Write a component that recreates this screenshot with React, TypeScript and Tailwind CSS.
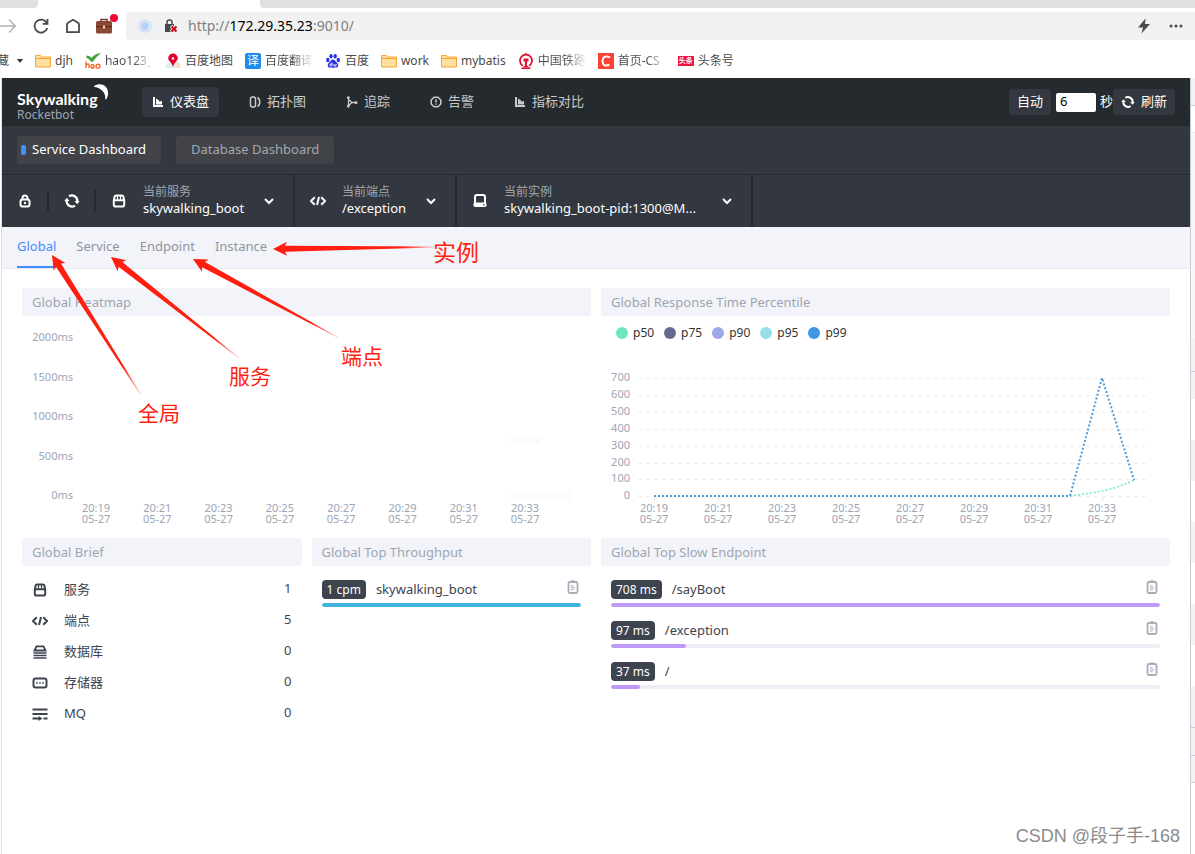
import React from 'react';

type IconProps = { className?: string };

const ChartIcon: React.FC<IconProps> = ({ className }) => (
    <svg viewBox="0 0 12 12" className={className} fill="currentColor">
        <path d="M1 1h2v8h8v2H1z" />
        <path d="M4 2.5 6.5 4l1 1.5L10 5v3.500H4z" />
    </svg>
);

const TopologyIcon: React.FC<IconProps> = ({ className }) => (
    <svg viewBox="0 0 12 12" className={className} fill="none" stroke="currentColor" strokeWidth="1.5">
        <rect x="1.500" y="1" width="5" height="10" rx="2" />
        <path d="M8.500 1.500c3 1.500 3 7.500 0 9" />
    </svg>
);

const TraceIcon: React.FC<IconProps> = ({ className }) => (
    <svg viewBox="0 0 12 12" className={className} fill="none" stroke="currentColor" strokeWidth="1.3">
        <path d="M2.500 2v8M2.500 3.500 6 6.500h4M6 6.500 2.500 9.500" />
        <circle cx="2.300" cy="1.800" r=".8" />
        <circle cx="2.300" cy="10.200" r=".8" />
        <circle cx="10" cy="6.800" r=".8" />
    </svg>
);

const AlarmIcon: React.FC<IconProps> = ({ className }) => (
    <svg viewBox="0 0 12 12" className={className} fill="none" stroke="currentColor" strokeWidth="1.5">
        <path d="M4 1.200h4L10.800 4v4L8 10.800H4L1.200 8V4z" strokeLinejoin="round" />
        <path d="M6 3.200v3.200M6 7.400v1.400" />
    </svg>
);

const RefreshIcon: React.FC<IconProps> = ({ className }) => (
    <svg viewBox="0 0 16 16" className={className} fill="none" stroke="currentColor" strokeWidth="2.200">
        <path d="M5 3.200A5.500 5.500 0 0 1 13.300 8.500M11 12.800A5.500 5.500 0 0 1 2.700 7.500" />
        <path d="M10.500 8h5.200l-2.500 3.200zM.3 8h5.200L2.800 4.800z" fill="currentColor" stroke="none" />
    </svg>
);

const LockIcon: React.FC<IconProps> = ({ className }) => (
    <svg viewBox="0 0 16 16" className={className} fill="none" stroke="currentColor" strokeWidth="2">
        <rect x="3.500" y="6.500" width="9" height="7" rx="2" />
        <path d="M5.500 6.500V5a2.500 2.500 0 0 1 5 0v1.500M8 9v2" />
    </svg>
);

const ServiceIcon: React.FC<IconProps> = ({ className }) => (
    <svg viewBox="0 0 16 16" className={className} fill="none" stroke="currentColor" strokeWidth="2">
        <path d="M2.800 7.500 3.500 4Q3.800 2.500 5.300 2.500h5.400Q12.200 2.500 12.500 4l.7 3.500v4.200q0 1.800-1.800 1.800H4.600q-1.800 0-1.800-1.800zM2.800 7.300h10.400" />
        <path d="M6.500 3v3.500M9.500 3v3.500" strokeWidth="1.200" />
    </svg>
);

const CodeIcon: React.FC<IconProps> = ({ className }) => (
    <svg viewBox="0 0 16 16" className={className} fill="none" stroke="currentColor" strokeWidth="2">
        <path d="M4.800 4.200 1 8l3.800 3.800M11.200 4.200 15 8l-3.800 3.800M9 4 7 12" />
    </svg>
);

const InstanceIcon: React.FC<IconProps> = ({ className }) => (
    <svg viewBox="0 0 16 16" className={className} fill="none" stroke="currentColor" strokeWidth="2">
        <path d="M3 10V4q0-2 2-2h6q2 0 2 2v6" />
        <rect x="1.500" y="9.500" width="13" height="4.500" rx="1.800" fill="currentColor" stroke="none" />
        <path d="M11 11.800h1.500" stroke="#333840" strokeWidth="1.300" />
    </svg>
);

const DatabaseIcon: React.FC<IconProps> = ({ className }) => (
    <svg viewBox="0 0 16 16" className={className} fill="none" stroke="currentColor" strokeWidth="1.800">
        <path d="M2.500 6.500 4.500 2.400h7l2 4.100z" />
        <path d="M1.500 9h13M1.500 11.500h13M1.500 14h13" strokeWidth="1.600" />
    </svg>
);

const StorageIcon: React.FC<IconProps> = ({ className }) => (
    <svg viewBox="0 0 16 16" className={className} fill="none" stroke="currentColor" strokeWidth="2">
        <rect x="1.500" y="3.500" width="13" height="9" rx="2" />
        <path d="M4.200 8h1.600M7.200 8h1.600M10.200 8h1.600" strokeWidth="1.600" />
    </svg>
);

const QueueIcon: React.FC<IconProps> = ({ className }) => (
    <svg viewBox="0 0 16 16" className={className} fill="none" stroke="currentColor" strokeWidth="2">
        <path d="M.5 3.500h15M.5 8h15M.5 12.500H7M11.500 12.500h4" />
        <path d="m6.500 10 4 2.500-4 2.500z" fill="currentColor" stroke="none" />
    </svg>
);

const ChevronIcon: React.FC<IconProps> = ({ className }) => (
    <svg viewBox="0 0 12 12" className={className} fill="none" stroke="currentColor" strokeWidth="2">
        <path d="m2 4 4 4 4-4" />
    </svg>
);

const ClipboardIcon: React.FC<IconProps> = ({ className }) => (
    <svg viewBox="0 0 12 14" className={className} fill="none" stroke="currentColor">
        <rect x="1.500" y="2" width="9" height="11" rx="1.500" strokeWidth="1.800" />
        <path d="M3 3V1.200L5 .2h2l2 1V3z" fill="currentColor" stroke="none" />
        <path d="M3.800 5.800h3M3.800 7.800h4.500M3.800 9.800h3" strokeWidth="1" />
    </svg>
);

const FolderIcon: React.FC = () => (
    <svg viewBox="0 0 16 16" className="size-4" fill="#ffdf9e" stroke="#f6a638">
        <path d="M.5 14V2.500h5l1 1.500h9v10z" />
        <path d="M.5 5.500h15" />
    </svg>
);

const HaoIcon: React.FC = () => (
    <svg viewBox="0 0 16 16" className="size-4">
        <path d="M2 2.500q3 0 4.500 2.500Q10 .5 16 0q-4 3-8 8.500-2 1-3-1-1-2-4-3z" fill="#3fa33c" />
        <path d="M1 8.500V15M1 12q3-2 3 0v3M9 12q-3-1-3 1.500t3 1V12v3" fill="none" stroke="#ef6a2f" strokeWidth="1.400" />
        <circle cx="13" cy="13.200" r="1.900" fill="none" stroke="#ef6a2f" strokeWidth="1.400" />
    </svg>
);

const MapIcon: React.FC = () => (
    <svg viewBox="0 0 16 16" className="size-4">
        <path d="m2 10 12-1 2 6H0z" fill="#dceff2" />
        <path d="m10 10 4-1 2 6h-4z" fill="#f8dfbd" />
        <path d="M8 .5a4.800 4.800 0 0 1 4.800 4.800C12.800 8 9 9.500 8 14 7 9.500 3.200 8 3.200 5.300A4.800 4.800 0 0 1 8 .5z" fill="#e3002b" />
        <circle cx="8" cy="5.500" r="1.200" fill="#fff" />
    </svg>
);

const TranslateIcon: React.FC = () => (
    <span className="flex size-4 items-center justify-center rounded-xs bg-[#1f8ceb] text-xs leading-4 text-white">译</span>
);

const PawIcon: React.FC = () => (
    <svg viewBox="0 0 16 16" className="size-4" fill="#2932e1">
        <ellipse cx="2.800" cy="7" rx="1.700" ry="2.200" />
        <ellipse cx="6" cy="3.200" rx="1.700" ry="2.200" />
        <ellipse cx="10.200" cy="3.200" rx="1.700" ry="2.200" />
        <ellipse cx="13.300" cy="7" rx="1.700" ry="2.200" />
        <path d="M8 6.500c2 0 2.500 2 4 3.200 2 1.800 1.500 4.500-.8 4.900-1.300.2-5 .2-6.400 0-2.300-.4-2.800-3.100-.8-4.900C5.500 8.500 6 6.500 8 6.500z" />
        <path d="M7 9.500v3.300q-2.300.5-2.300-.9T7 11M9 11v2h2v-2" fill="none" stroke="#fff" strokeWidth=".9" />
    </svg>
);

const RailIcon: React.FC = () => (
    <svg viewBox="0 0 16 16" className="size-4" fill="none" stroke="#dc1432">
        <path d="M5 12.800a6 6 0 1 1 6 0" strokeWidth="1.800" />
        <path d="M5.500 5.500h5v3H9v4l2.500 2h-7L7 12.500v-4H5.500z" fill="#dc1432" stroke="none" />
        <path d="M8 0v2M3.500 15.300h9" strokeWidth="1.400" />
    </svg>
);

const CsdnIcon: React.FC = () => (
    <svg viewBox="0 0 16 16" className="size-4">
        <rect width="16" height="16" fill="#fc4234" />
        <path d="M12 4.300Q4.800 1.800 4.500 8q0 6.200 7 3.800" fill="none" stroke="#fff" strokeWidth="2" />
    </svg>
);

const ToutiaoIcon: React.FC = () => (
    <span className="flex h-2.5 w-4 items-center justify-center bg-[#f2133c] text-[7px] font-bold text-white">头条</span>
);

const bookmarks = [
    { label: 'djh', icon: <FolderIcon /> },
    { label: 'hao123_', icon: <HaoIcon />, fade: true },
    { label: '百度地图', icon: <MapIcon /> },
    { label: '百度翻译', icon: <TranslateIcon />, fade: true },
    { label: '百度', icon: <PawIcon /> },
    { label: 'work', icon: <FolderIcon /> },
    { label: 'mybatis', icon: <FolderIcon /> },
    { label: '中国铁路', icon: <RailIcon />, fade: true },
    { label: '首页-CS', icon: <CsdnIcon />, fade: true },
    { label: '头条号', icon: <ToutiaoIcon /> },
];

const BrowserBar: React.FC = () => (
    <header className="text-[#4a4a4a]">
        <div className="flex h-2 justify-between">
            <div className="w-[38px] rounded-br-sm bg-[#e0e0e0]"></div>
            <div className="ml-[222px] flex-1 rounded-bl-sm bg-[#e0e0e0]"></div>
        </div>
        <div className="flex h-9 items-center pb-px">
            <button aria-label="Forward" className="w-4">
                <svg viewBox="0 0 16 16" className="size-4" fill="none" stroke="#b0b0b0" strokeWidth="1.500">
                    <path d="M0 8h15M9 1.500 15.300 8 9 14.500" />
                </svg>
            </button>
            <button aria-label="Reload" className="ml-[17px]">
                <svg viewBox="0 0 16 16" className="size-4" fill="none" stroke="#4a4a4a" strokeWidth="1.800">
                    <path d="M13.800 5A6.500 6.500 0 1 0 14.300 10M14.500 1v4.800H9.800" />
                </svg>
            </button>
            <button aria-label="Home" className="ml-4">
                <svg viewBox="0 0 16 16" className="size-4" fill="none" stroke="#4a4a4a" strokeWidth="1.800">
                    <path d="M2 14.200V6.500Q2 5.500 3 4.800L8 1.800l5 3q1 .7 1 1.700v7.700z" strokeLinejoin="round" />
                </svg>
            </button>
            <button aria-label="Work" className="relative ml-[15px]">
                <svg viewBox="0 0 16 16" className="size-4">
                    <path d="M5 3V1.500h6V3" fill="none" stroke="#7b3c2c" strokeWidth="1.500" />
                    <rect y="3" width="16" height="12.500" rx="1.500" fill="#8c4636" />
                    <path d="M0 8.500h16" stroke="#5e2a20" />
                    <rect x="7" y="7.500" width="2" height="3" fill="#f3d58a" />
                </svg>
                <span className="absolute -top-1 -right-1.5 size-2 rounded-full bg-[#f00536]"></span>
            </button>
            <div className="ml-[14px] flex h-7 flex-1 items-center rounded-l-sm bg-[#f1f1f1] pl-3">
                <svg viewBox="0 0 14 14" className="size-3.5">
                    <circle cx="7" cy="7" r="6" fill="none" stroke="#c5dafa" strokeWidth="1.200" />
                    <circle cx="7" cy="7" r="4.200" fill="#b6d2fb" />
                </svg>
                <svg viewBox="0 0 14 14" className="ml-3 size-3.5">
                    <rect x="1" y="5" width="9" height="8" fill="#4a4a4a" />
                    <path d="M3 5.500V3q0-2 2.500-2T8 3v2.500" fill="none" stroke="#4a4a4a" strokeWidth="1.500" />
                    <path d="m7 7 6 6M13 7l-6 6" stroke="#f1f1f1" strokeWidth="3.500" />
                    <path d="m7.500 7.500 5 5M12.500 7.500l-5 5" stroke="#d0021b" strokeWidth="2" />
                </svg>
                <p className="ml-2.5 text-sm text-[#808080]">
                    http://<span className="text-black">172.29.35.23</span>:9010/
                </p>
                <svg viewBox="0 0 14 16" className="mr-[18px] ml-auto h-4 w-3.5" fill="#4a4a4a">
                    <path d="M8.500.5 1 9.500h5L4.500 15.500 13 6H8z" />
                </svg>
                <svg viewBox="0 0 14 4" className="mr-3 h-1 w-3.5" fill="#4a4a4a">
                    <circle cx="2" cy="2" r="1.500" />
                    <circle cx="7" cy="2" r="1.500" />
                    <circle cx="12" cy="2" r="1.500" />
                </svg>
            </div>
        </div>
        <nav className="flex h-[34px] items-center gap-3 overflow-hidden text-xs whitespace-nowrap">
            <div className="flex items-center">
                <span className="flex w-[9px] justify-end overflow-hidden">藏</span>
                <svg viewBox="0 0 6 4" className="ml-2 h-1 w-1.5" fill="#333">
                    <path d="M0 0h6L3 4z" />
                </svg>
            </div>
            {bookmarks.map((item) => (
                <a key={item.label} href="#" className="flex items-center gap-1">
                    {item.icon}
                    <span className={item.fade ? 'w-12 overflow-hidden bg-linear-to-r from-[#4a4a4a] from-60% to-transparent bg-clip-text text-transparent' : ''}>
                        {item.label}
                    </span>
                </a>
            ))}
        </nav>
    </header>
);

const navItems = [
    { label: '仪表盘', Icon: ChartIcon, active: true },
    { label: '拓扑图', Icon: TopologyIcon },
    { label: '追踪', Icon: TraceIcon },
    { label: '告警', Icon: AlarmIcon },
    { label: '指标对比', Icon: ChartIcon },
];

const TopNav: React.FC = () => (
    <div className="flex h-12 items-center bg-[#252a2f] px-[15px] text-[13px]">
        <div className="relative w-[125px] pt-1.5 text-white">
            <div className="font-[Lato] text-base leading-5 font-bold">Skywalking</div>
            <div className="text-xs leading-3 text-[#9da5b2]">Rocketbot</div>
            <svg viewBox="0 0 16 18" className="absolute top-0 left-[76px] h-[18px] w-4" fill="#fff">
                <path d="M1 3C9-2 19 5 13.500 16 13 17 12 16 12.200 15.500 13 10 8 4.500 1 4z" />
            </svg>
        </div>
        <nav className="flex gap-5">
            {navItems.map(({ label, Icon, active }) => (
                <a
                    key={label}
                    href="#"
                    className={`flex h-[30px] items-center gap-1.5 rounded px-2.5 ${active ? 'bg-[#333840] text-white' : 'text-[#c8cacc]'}`}
                >
                    <Icon className="size-3" />
                    {label}
                </a>
            ))}
        </nav>
        <div className="ml-auto flex items-center text-white">
            <button className="h-[26px] rounded bg-[#333840] px-2">自动</button>
            <input
                id="seconds"
                defaultValue="6"
                className="ml-[5px] h-[19px] w-10 rounded-xs bg-white px-1 text-black outline-none"
            />
            <label htmlFor="seconds" className="ml-1">秒</label>
            <button className="flex h-[26px] items-center gap-1.5 rounded bg-[#333840] px-2">
                <RefreshIcon className="size-3.5" />
                刷新
            </button>
        </div>
    </div>
);

const DashboardBar: React.FC = () => (
    <div className="flex h-[49px] items-center gap-[15px] border-b border-[#252a2f] bg-[#333840] px-[15px] text-[13px]">
        <button className="relative h-7 rounded bg-[#414349] px-[15px] text-white">
            <span className="absolute top-[9px] left-1 h-2.5 w-[5px] rounded-xs bg-[#448dfe]"></span>
            Service Dashboard
        </button>
        <button className="h-7 rounded bg-[#414349] px-[15px] text-[#a3a7ae]">Database Dashboard</button>
    </div>
);

const selectors = [
    { id: 'service', label: '当前服务', value: 'skywalking_boot', Icon: ServiceIcon, width: 'w-[120px]' },
    { id: 'endpoint', label: '当前端点', value: '/exception', Icon: CodeIcon, width: 'w-[83px]' },
    { id: 'instance', label: '当前实例', value: 'skywalking_boot-pid:1300@M...', Icon: InstanceIcon, width: 'w-[217px]' },
];

const SelectorBar: React.FC = () => (
    <div className="flex h-[52px] items-center bg-[#333840] text-white">
        <button aria-label="Lock" className="flex w-[45px] justify-center">
            <LockIcon className="size-4" />
        </button>
        <div className="h-[22px] w-0.5 bg-[#252a2f]"></div>
        <button aria-label="Reload data" className="flex w-[45px] justify-center">
            <RefreshIcon className="size-4" />
        </button>
        <div className="h-[22px] w-0.5 bg-[#252a2f]"></div>
        {selectors.map(({ id, label, value, Icon, width }) => (
            <div key={id} className="flex h-full items-center border-r-2 border-[#252a2f] pr-[18px] pl-[15px]">
                <Icon className="mr-4 size-4" />
                <div className={width}>
                    <label htmlFor={id} className="block text-xs leading-[14px] text-[#a3a7ae]">{label}</label>
                    <select id={id} className="block w-full appearance-none text-[13px] leading-[18px]">
                        <option>{value}</option>
                    </select>
                </div>
                <ChevronIcon className="size-3" />
            </div>
        ))}
    </div>
);

const tabs = ['Global', 'Service', 'Endpoint', 'Instance'];

const Tabs: React.FC = () => (
    <nav className="flex h-[42px] gap-5 border-b border-[#e8eaee] bg-[#f3f4f9] px-[15px] text-[13px]">
        {tabs.map((tab, i) => (
            <a
                key={tab}
                href="#"
                className={`border-b-2 pt-[10px] ${i === 0 ? 'border-[#448dfe] text-[#448dfe]' : 'border-transparent text-[#8f949f]'}`}
            >
                {tab}
            </a>
        ))}
    </nav>
);

const Panel: React.FC<{ title: string; wide?: boolean; children: React.ReactNode }> = ({ title, wide, children }) => (
    <section className={wide ? 'col-span-2' : ''}>
        <h2 className="h-7 rounded-xs bg-[#f3f4f9] px-2.5 text-[13px] leading-7 text-[#9da5b2]">{title}</h2>
        {children}
    </section>
);

const times = ['20:19', '20:21', '20:23', '20:25', '20:27', '20:29', '20:31', '20:33'];

const TimeAxis: React.FC<{ start: number; step: number; y: number }> = ({ start, step, y }) => (
    <>
        {times.map((time, i) => (
            <g key={time} textAnchor="middle">
                <text x={start + i * step} y={y}>{time}</text>
                <text x={start + i * step} y={y + 11}>05-27</text>
            </g>
        ))}
    </>
);

const Heatmap: React.FC = () => (
    <svg viewBox="0 0 569 222" className="block w-full text-[11px]" fill="#9da5b2">
        {['2000ms', '1500ms', '1000ms', '500ms', '0ms'].map((label, i) => (
            <text key={label} x="51" y={25 + i * 39.5} textAnchor="end">{label}</text>
        ))}
        <rect x="488" y="121" width="30" height="7" fill="#fafbfd" />
        <rect x="488" y="176" width="61" height="8" fill="#fafbfd" />
        <TimeAxis start={74} step={61.3} y={196} />
    </svg>
);

const legend = [
    { name: 'p50', color: 'bg-[#6be6c1]' },
    { name: 'p75', color: 'bg-[#626c91]' },
    { name: 'p90', color: 'bg-[#a0a7e6]' },
    { name: 'p95', color: 'bg-[#96dee8]' },
    { name: 'p99', color: 'bg-[#3f96e3]' },
];

const Percentile: React.FC = () => (
    <>
        <ul className="flex h-[34px] items-center gap-2.5 px-[15px] text-xs text-[#333]">
            {legend.map((item) => (
                <li key={item.name} className="flex items-center gap-[5px]">
                    <span className={`size-3 rounded-full ${item.color}`}></span>
                    {item.name}
                </li>
            ))}
        </ul>
        <svg viewBox="0 0 569 188" className="block w-full text-[11px]" fill="#9da5b2">
            {[700, 600, 500, 400, 300, 200, 100, 0].map((value, i) => (
                <g key={value}>
                    <text x="29" y={31 + i * 16.9} textAnchor="end">{value}</text>
                    <path d={`M37 ${Math.round(28 + i * 16.9) + 0.5}H546`} stroke="#eeeeee" strokeDasharray="4 4" />
                </g>
            ))}
            {times.map((time, i) => (
                <path key={time} d={`M${53.5 + i * 64} 147v4`} stroke="#e4e6ea" />
            ))}
            <g fill="none" strokeWidth="2" strokeDasharray="2 2">
                <path d="M469 146 Q485 144 501 141T533 130" stroke="#6be6c1" strokeWidth="1.500" />
                <path d="M53 146H469L501 28L533 130" stroke="#4a9ddf" />
            </g>
            <TimeAxis start={53} step={64} y={162} />
        </svg>
    </>
);

const brief = [
    { label: '服务', count: 1, Icon: ServiceIcon },
    { label: '端点', count: 5, Icon: CodeIcon },
    { label: '数据库', count: 0, Icon: DatabaseIcon },
    { label: '存储器', count: 0, Icon: StorageIcon },
    { label: 'MQ', count: 0, Icon: QueueIcon },
];

const Brief: React.FC = () => (
    <ul className="px-2.5 pt-2 text-[13px] text-[#3d444f]">
        {brief.map(({ label, count, Icon }) => (
            <li key={label} className="flex h-[31px] items-center">
                <Icon className="mr-4 size-4" />
                <span>{label}</span>
                <span className="mb-0.5 ml-auto">{count}</span>
            </li>
        ))}
    </ul>
);

type TopItem = { value: number; name: string };

const TopList: React.FC<{ items: TopItem[]; unit: string; color: string }> = ({ items, unit, color }) => (
    <ul className="px-2.5 pt-3.5">
        {items.map(({ value, name }) => (
            <li key={name} className="mb-3.5 text-[13px] text-[#3d444f]">
                <div className="flex h-[19px] items-center">
                    <span className="mr-2.5 rounded bg-[#3d444f] px-[5px] text-xs leading-[19px] text-white">{value} {unit}</span>
                    {name}
                    <button aria-label="Copy" className="mr-0.5 mb-1.5 ml-auto text-[#a7aebb]">
                        <ClipboardIcon className="h-3.5 w-3" />
                    </button>
                </div>
                <div className="mt-1 h-1 overflow-hidden rounded-xs bg-[#ededf3]">
                    <div className={`h-full rounded-xs ${color}`} style={{ width: `${(value / items[0].value) * 100}%` }}></div>
                </div>
            </li>
        ))}
    </ul>
);

// slice of the window that sits behind, top to bottom
const strips = [
    'h-[27px] bg-[#f3f3f6]',
    'h-[27px] border-t border-[#c8ccd2] bg-white',
    'h-[206px] border-t border-[#e6e8ec] bg-[#f8f8fa]',
    'h-[33px] bg-[#f3f3f6]',
    'h-[28px] border-t border-[#c8ccd2] bg-[#f3f3f6]',
    'h-[41px] bg-white',
    'h-[41px] bg-[#f3f3f6]',
    'h-[41px] bg-white',
    'h-[41px] bg-[#f3f3f6]',
    'h-[41px] bg-white',
    'h-[41px] bg-[#f3f3f6]',
    'h-[41px] bg-white',
    'h-[41px] bg-[#f3f3f6]',
    'h-[28px] border-t border-[#c8ccd2] bg-[#f3f3f6]',
    'h-[27px] border-t border-[#c8ccd2] bg-[#f3f3f6]',
    'flex-1 border-t border-[#c8ccd2] bg-white',
];

const arrows = [
    { from: [141, 395], to: [52, 255] },
    { from: [239, 358], to: [111, 257] },
    { from: [339, 338], to: [193, 259] },
    { from: [434, 247], to: [273, 249] },
];

const arrowPoints = (from: number[], to: number[]) => {
    const length = Math.hypot(from[0] - to[0], from[1] - to[1]);
    const ux = (from[0] - to[0]) / length;
    const uy = (from[1] - to[1]) / length;
    const at = (along: number, side: number) => `${to[0] + ux * along - uy * side},${to[1] + uy * along + ux * side}`;
    return [at(0, 0), at(14, 7), at(12, 3), at(length, 0.4), at(length, -0.4), at(12, -3), at(14, -7)].join(' ');
};

const Annotations: React.FC = () => (
    <div className="pointer-events-none absolute top-0 left-0 text-[21px] leading-6 text-[#ff1e10]">
        <svg width="500" height="430" viewBox="0 0 500 430">
            {arrows.map(({ from, to }, i) => (
                <g key={i}>
                    <linearGradient id={`arrow-${i}`} gradientUnits="userSpaceOnUse" x1={to[0]} y1={to[1]} x2={from[0]} y2={from[1]}>
                        <stop offset="0.8" stopColor="#ff1e10" />
                        <stop offset="1" stopColor="#ff1e10" stopOpacity="0.2" />
                    </linearGradient>
                    <polygon points={arrowPoints(from, to)} fill={`url(#arrow-${i})`} />
                </g>
            ))}
        </svg>
        <span className="absolute top-[401px] left-[138px] whitespace-nowrap">全局</span>
        <span className="absolute top-[364px] left-[229px] whitespace-nowrap">服务</span>
        <span className="absolute top-[344px] left-[341px] whitespace-nowrap">端点</span>
        <span className="absolute top-[240px] left-[433px] text-[23px] whitespace-nowrap">实例</span>
    </div>
);

const App: React.FC = () => {
    return (
        <div className="relative flex min-h-screen flex-col bg-white font-['Noto_Sans','Noto_Sans_CJK_SC',sans-serif]">
            <BrowserBar />
            <div className="flex flex-1">
                <main className="ml-px flex-1 border-l border-[#dcdfe3]">
                    <TopNav />
                    <DashboardBar />
                    <SelectorBar />
                    <Tabs />
                    <div className="grid grid-cols-4 gap-x-2.5 px-5 pt-[19px]">
                        <Panel title="Global Heatmap" wide>
                            <Heatmap />
                        </Panel>
                        <Panel title="Global Response Time Percentile" wide>
                            <Percentile />
                        </Panel>
                        <Panel title="Global Brief">
                            <Brief />
                        </Panel>
                        <Panel title="Global Top Throughput">
                            <TopList items={[{ value: 1, name: 'skywalking_boot' }]} unit="cpm" color="bg-[#3fb1e3]" />
                        </Panel>
                        <Panel title="Global Top Slow Endpoint" wide>
                            <TopList
                                items={[
                                    { value: 708, name: '/sayBoot' },
                                    { value: 97, name: '/exception' },
                                    { value: 37, name: '/' },
                                ]}
                                unit="ms"
                                color="bg-[#bf99f8]"
                            />
                        </Panel>
                    </div>
                </main>
                <aside className="flex w-[5px] flex-col border-l border-[#c8ccd2]">
                    {strips.map((strip, i) => (
                        <div key={i} className={strip}></div>
                    ))}
                </aside>
            </div>
            <Annotations />
            <p className="absolute right-[15px] bottom-1.5 font-['Liberation_Sans','Noto_Sans_CJK_SC',sans-serif] text-lg leading-6 text-[#8c8c8c]">
                CSDN @段子手-168
            </p>
        </div>
    );
};

export default App;
